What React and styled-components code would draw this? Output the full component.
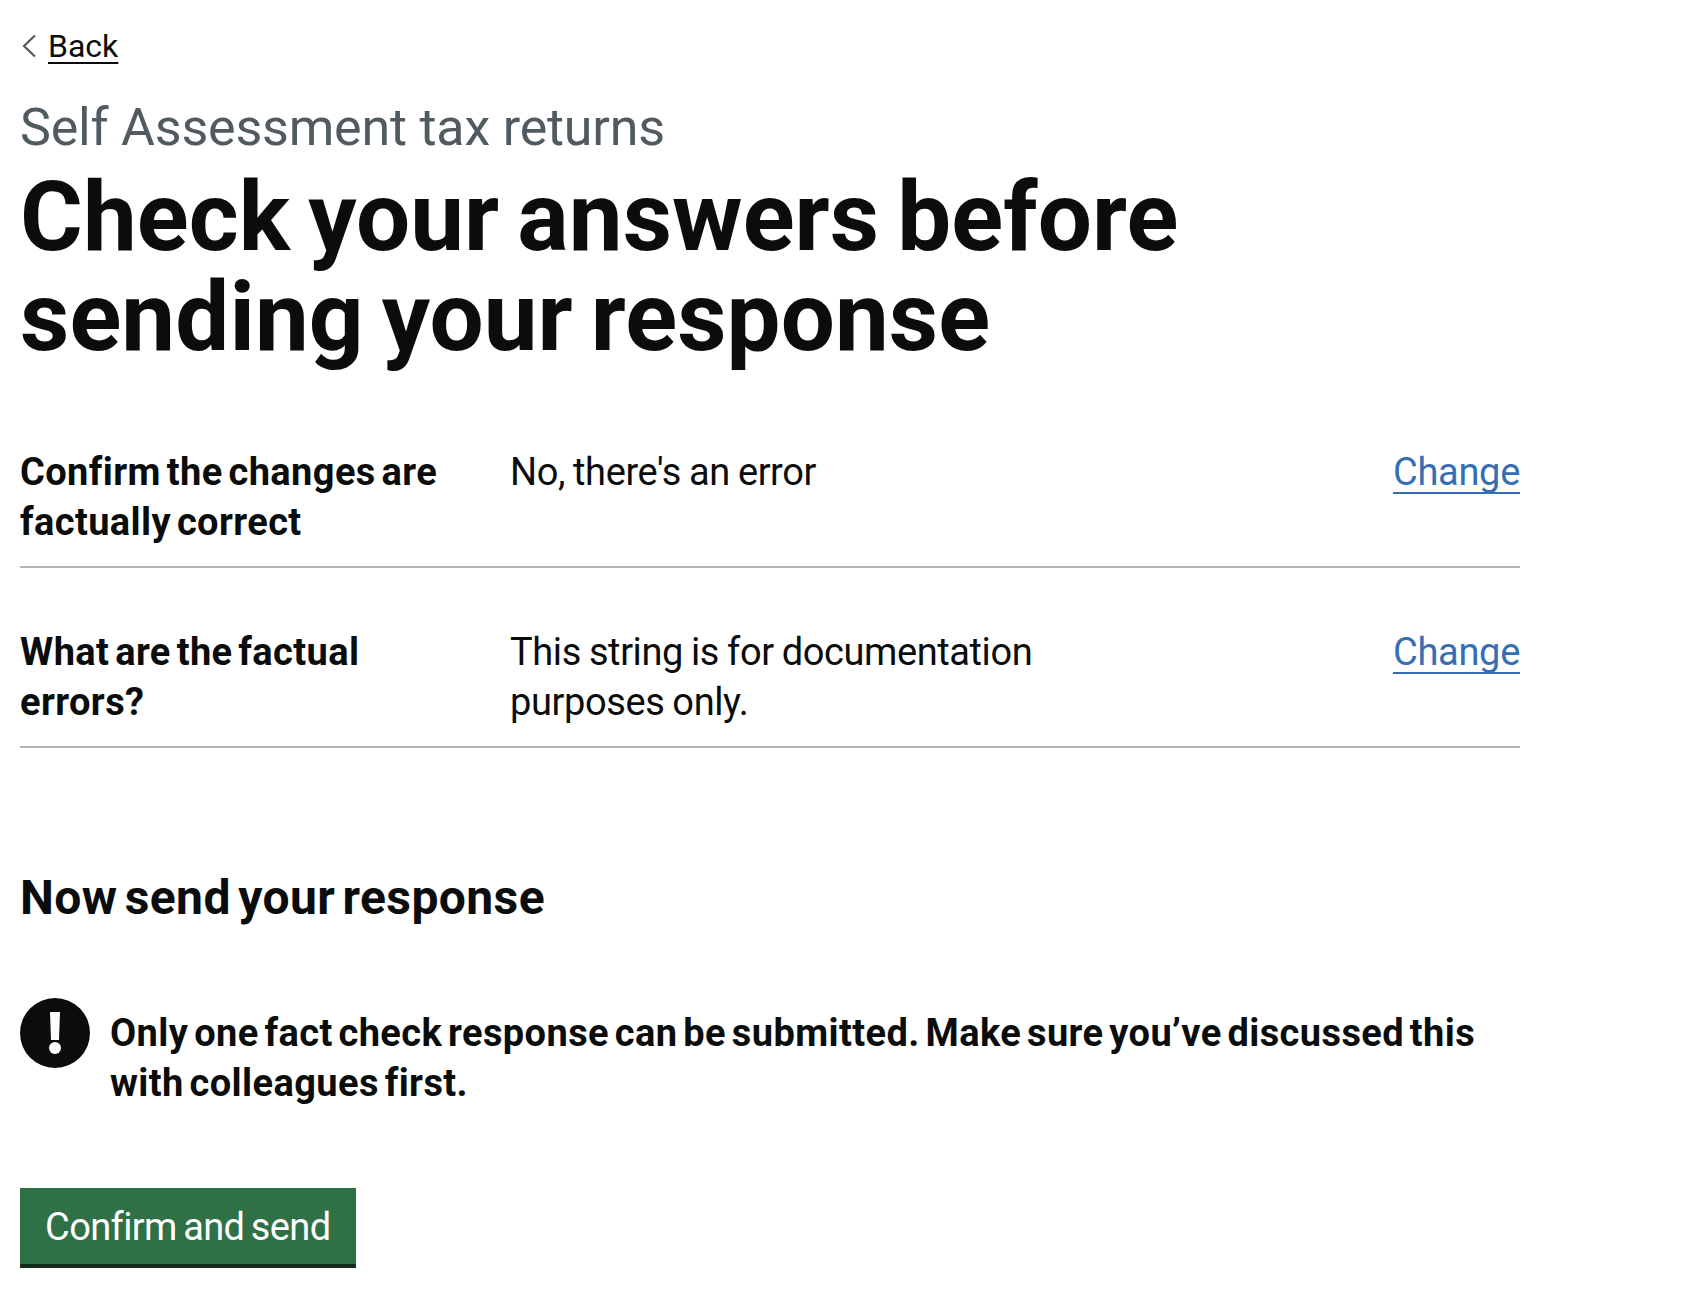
import React from "react";
import styled, { createGlobalStyle } from "styled-components";

const GlobalStyle = createGlobalStyle`
  * { box-sizing: border-box; }
  html, body { margin: 0; background: #fff; }
  body {
    font-family: Roboto, "Noto Sans", sans-serif;
    color: #0b0c0c;
  }
`;

const Page = styled.main`
  width: 1500px;
  margin-left: 20px;
  padding-top: 26px;
`;

const BackLink = styled.a`
  display: inline-flex;
  align-items: center;
  gap: 11px;
  font-size: 32px;
  line-height: 40px;
  color: #0b0c0c;
  text-decoration: none;
  svg { flex: none; margin-left: 1px; }
  span {
    text-decoration: underline;
    text-underline-offset: 5px;
    text-decoration-thickness: 2px;
    text-decoration-skip-ink: none;
  }
`;

const Caption = styled.span`
  display: block;
  margin-top: 32px;
  font-size: 52px;
  line-height: 60px;
  letter-spacing: -0.2px;
  color: #505a5f;
`;

const Title = styled.h1`
  margin: 9px 0 21px;
  width: 1300px;
  font-size: 96px;
  line-height: 100px;
  font-weight: 700;
  letter-spacing: 0.1px;
  word-spacing: -6px;
`;

const SummaryList = styled.dl`
  margin: 0;
`;

const Row = styled.div`
  display: grid;
  grid-template-columns: 490px 1fr auto;
  padding: 59px 0 19px;
  border-bottom: 2px solid #b1b4b6;
  font-size: 38px;
  line-height: 50px;
`;

const Key = styled.dt`
  margin: 0;
  width: 450px;
  font-weight: 700;
  letter-spacing: 0.4px;
  word-spacing: -4px;
`;

const Value = styled.dd`
  margin: 0;
  width: 560px;
  letter-spacing: -0.4px;
  word-spacing: -1px;
`;

const ChangeLink = styled.a`
  color: #356eb3;
  letter-spacing: -0.3px;
  text-decoration: underline;
  text-underline-offset: 7px;
  text-decoration-thickness: 2px;
  text-decoration-skip-ink: none;
`;

const SectionHeading = styled.h2`
  margin: 120px 0 0;
  font-size: 48px;
  line-height: 60px;
  font-weight: 700;
  letter-spacing: 0.4px;
  word-spacing: -5px;
`;

const Warning = styled.div`
  display: flex;
  align-items: flex-start;
  gap: 20px;
  margin-top: 70px;
`;

const WarningIcon = styled.span`
  flex: none;
  display: block;
  width: 70px;
  height: 70px;
  svg { display: block; }
`;

const WarningText = styled.strong`
  padding-top: 10px;
  font-size: 38px;
  line-height: 50px;
  font-weight: 700;
  letter-spacing: 0.4px;
  word-spacing: -4px;
`;

const SubmitButton = styled.button`
  display: block;
  height: 80px;
  margin-top: 80px;
  padding: 0 25px 2px;
  border: 0;
  background: #307046;
  box-shadow: inset 0 -4px 0 #142d1c;
  color: #fff;
  font-family: inherit;
  font-size: 38px;
  line-height: 50px;
  letter-spacing: -0.6px;
  word-spacing: -2.5px;
`;

const rows = [
  { key: "Confirm the changes are factually correct", value: "No, there's an error" },
  { key: "What are the factual errors?", value: "This string is for documentation purposes only." },
];

export default function App() {
  return (
    <>
      <GlobalStyle />
      <Page>
        <BackLink href="#">
          <svg width="16" height="24" viewBox="0 0 16 24" fill="none" stroke="#505a5f" strokeWidth="2.2">
            <path d="M14 1.5 3 12l11 10.5" />
          </svg>
          <span>Back</span>
        </BackLink>
        <Caption>Self Assessment tax returns</Caption>
        <Title>Check your answers before sending your response</Title>
        <SummaryList>
          {rows.map((row) => (
            <Row key={row.key}>
              <Key>{row.key}</Key>
              <Value>{row.value}</Value>
              <ChangeLink href="#">Change</ChangeLink>
            </Row>
          ))}
        </SummaryList>
        <SectionHeading>Now send your response</SectionHeading>
        <Warning>
          <WarningIcon>
            <svg width="70" height="70" viewBox="0 0 70 70">
              <circle cx="35" cy="35" r="35" fill="#0b0c0c" />
              <polygon points="30,14 40,14 39,42 31,42" fill="#fff" />
              <circle cx="35" cy="50" r="6" fill="#fff" />
            </svg>
          </WarningIcon>
          <WarningText>
            Only one fact check response can be submitted. Make sure you’ve discussed this with colleagues first.
          </WarningText>
        </Warning>
        <SubmitButton>Confirm and send</SubmitButton>
      </Page>
    </>
  );
}
